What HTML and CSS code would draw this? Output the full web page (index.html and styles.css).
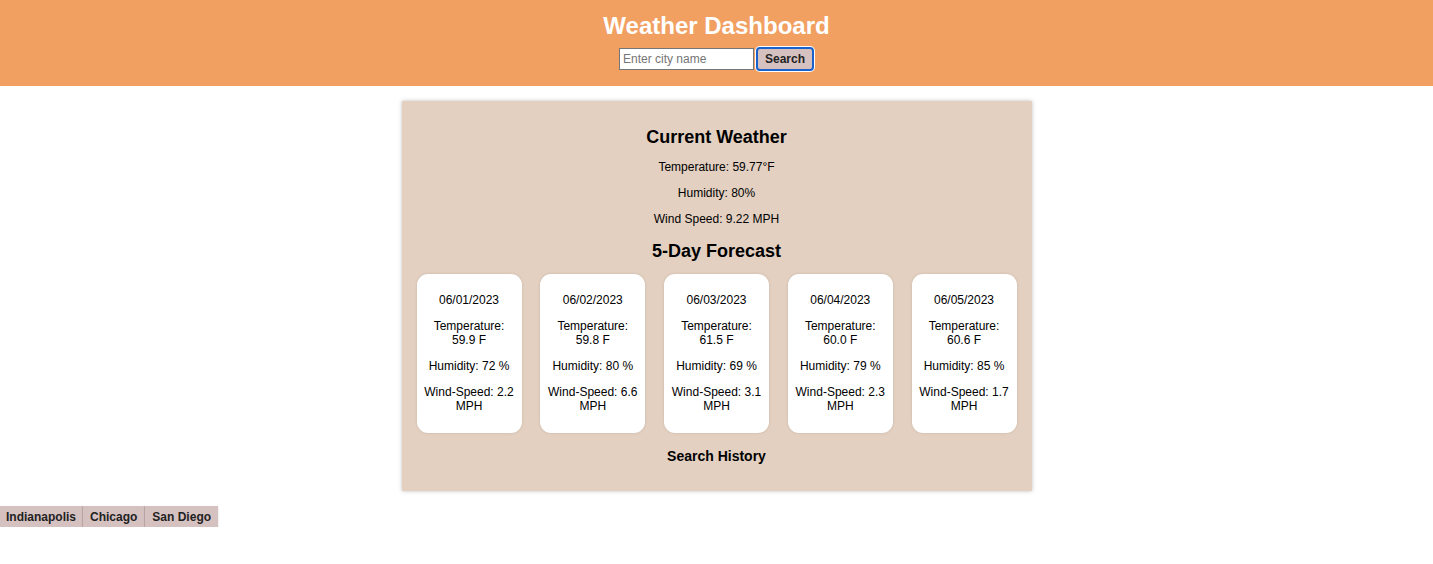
FILE: index.html
```html
<!DOCTYPE html>
<html lang="en">
<head>
<meta charset="utf-8">
<title>Weather Dashboard</title>
<link rel="stylesheet" href="styles.css">
</head>
<body>
<header class="header">
  <h1 class="title">Weather Dashboard</h1>
  <form class="search-form">
    <input class="city-input" type="text" placeholder="Enter city name">
    <button class="search-btn" type="button">Search</button>
  </form>
</header>
<main class="panel">
  <h2 class="section-title">Current Weather</h2>
  <p class="line">Temperature: 59.77°F</p>
  <p class="line">Humidity: 80%</p>
  <p class="line">Wind Speed: 9.22 MPH</p>
  <h2 class="section-title forecast-title">5-Day Forecast</h2>
  <div class="cards">
    <div class="card"><p>06/01/2023</p><p>Temperature: 59.9 F</p><p>Humidity: 72 %</p><p>Wind-Speed: 2.2 MPH</p></div>
    <div class="card"><p>06/02/2023</p><p>Temperature: 59.8 F</p><p>Humidity: 80 %</p><p>Wind-Speed: 6.6 MPH</p></div>
    <div class="card"><p>06/03/2023</p><p>Temperature: 61.5 F</p><p>Humidity: 69 %</p><p>Wind-Speed: 3.1 MPH</p></div>
    <div class="card"><p>06/04/2023</p><p>Temperature: 60.0 F</p><p>Humidity: 79 %</p><p>Wind-Speed: 2.3 MPH</p></div>
    <div class="card"><p>06/05/2023</p><p>Temperature: 60.6 F</p><p>Humidity: 85 %</p><p>Wind-Speed: 1.7 MPH</p></div>
  </div>
  <h3 class="history-title">Search History</h3>
</main>
<div class="history">
  <button class="history-btn" type="button">Indianapolis</button><button class="history-btn" type="button">Chicago</button><button class="history-btn" type="button">San Diego</button>
</div>
</body>
</html>
```

FILE: styles.css
```css
* { box-sizing: border-box; }
body {
  margin: 0;
  font-family: "Liberation Sans", Arial, sans-serif;
  color: #000;
  background: #fff;
}
.header {
  background: #f2a062;
  text-align: center;
  padding: 12px 0 15px;
}
.title {
  margin: 0 0 7px;
  font-size: 24px;
  line-height: 28px;
  color: #fff;
  font-weight: bold;
}
.search-form {
  display: flex;
  justify-content: center;
  align-items: center;
  gap: 2px;
}
.city-input {
  width: 135px;
  height: 22px;
  border: 1px solid #767676;
  padding: 1px 3px;
  font-family: "Liberation Sans", Arial, sans-serif;
  font-size: 12px;
  color: #000;
  background: #fff;
  margin: 0;
}
.city-input::placeholder { color: #757575; }
.search-btn {
  width: 58px;
  height: 24px;
  border: 2px solid #1a62c9;
  border-radius: 4px;
  background: #d6c1c1;
  font-family: "Liberation Sans", Arial, sans-serif;
  font-size: 12px;
  font-weight: bold;
  color: #222;
  padding: 0;
  margin: 0;
  box-shadow: 0 0 0 1px #fff;
}
.panel {
  width: 630px;
  margin: 15px auto 0;
  background: #e3d0c1;
  padding: 14px 15px 12px;
  text-align: center;
  box-shadow: 0 0 4px rgba(0,0,0,0.25);
}
.section-title {
  font-size: 18px;
  line-height: 21px;
  margin: 12px 0 8px;
}
.forecast-title { margin: 15px 0 12px; }
.line {
  font-size: 12px;
  line-height: 14px;
  margin: 12px 0;
}
.cards {
  display: flex;
  justify-content: space-between;
}
.card {
  width: 105px;
  background: #fff;
  border-radius: 11px;
  padding: 7px 4px 8px;
  box-shadow: 0 0 3px rgba(0,0,0,0.12);
}
.card p {
  font-size: 12px;
  line-height: 14px;
  margin: 12px 0;
}
.history-title {
  font-size: 14px;
  line-height: 16px;
  margin: 15px 0 15px;
}
.history {
  margin-top: 15px;
  display: flex;
}
.history-btn {
  height: 21px;
  background: #d6c1c1;
  border: none;
  border-right: 1px solid #c3adad;
  font-family: "Liberation Sans", Arial, sans-serif;
  font-size: 12px;
  font-weight: bold;
  color: #222;
  padding: 0 7px;
  margin: 0;
  box-shadow: 0 1px 2px rgba(0,0,0,0.15);
}
.history-btn:first-child { padding: 0 6px; }
.history-btn:last-child { border-right: none; }
```
